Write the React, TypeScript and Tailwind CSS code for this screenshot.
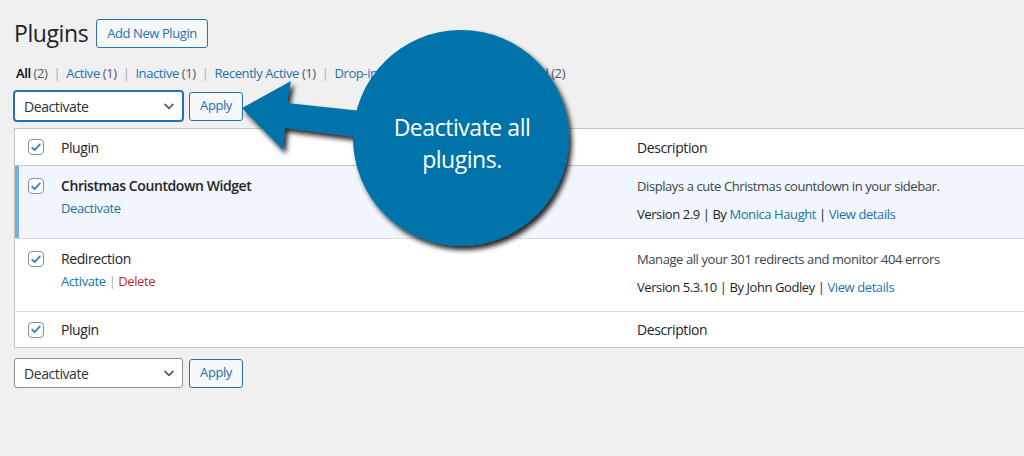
import React from "react";

const FONT = { fontFamily: '"Open Sans", "Noto Sans", sans-serif', letterSpacing: "-0.026em" };

const Check = () => (
  <span className="flex size-4 items-center justify-center rounded-[4px] border border-[#8c8f94] bg-white">
    <svg viewBox="0 0 20 20" className="size-[15px]" fill="none">
      <path d="M4.5 10.2l3.6 3.6 7.4-8.2" stroke="#3582c4" strokeWidth="2.6" strokeLinecap="round" strokeLinejoin="round" />
    </svg>
  </span>
);

const Sep = () => <span className="px-[6px] text-[#a7aaad]">|</span>;

const Chevron = () => (
  <svg viewBox="0 0 20 20" className="size-4" fill="none">
    <path d="M5 8l5 5 5-5" stroke="#50575e" strokeWidth="2" strokeLinecap="round" strokeLinejoin="round" />
  </svg>
);

const BulkActions = ({ focused = false }: { focused?: boolean }) => (
  <div className="flex items-center gap-[6px]">
    <div
      className={`flex h-[30px] w-[169px] items-center justify-between rounded-[3px] border bg-white pl-[9px] pr-[5px] text-[14px] text-[#2c3338] ${
        focused ? "border-[#2271b1] shadow-[0_0_0_1px_#2271b1]" : "border-[#8c8f94]"
      }`}
    >
      <span>Deactivate</span>
      <Chevron />
    </div>
    <button className="h-[29px] w-[54px] rounded-[3px] border border-[#2271b1] bg-[#f6f7f7] text-[13px] text-[#2271b1]">
      Apply
    </button>
  </div>
);

const Row = ({
  name,
  active,
  desc,
  version,
  author,
  authorLink,
}: {
  name: string;
  active: boolean;
  desc: string;
  version: string;
  author: string;
  authorLink: boolean;
}) => (
  <div
    className={`flex h-[73px] border-b border-[#dcdcde] ${active ? "bg-[#f0f6fc]" : "bg-white"}`}
  >
    <div className={`w-[37px] shrink-0 pt-[12px] ${active ? "border-l-4 border-[#72aee6] pl-[9px]" : "pl-[13px]"}`}>
      <Check />
    </div>
    <div className="w-[576px] shrink-0 pl-[9px] pt-[9px]">
      <div className={`text-[14px] text-[#1d2327] ${active ? "font-semibold" : ""}`}>{name}</div>
      <div className="mt-[3px] text-[13px]">
        {active ? (
          <span className="text-[#2271b1]">Deactivate</span>
        ) : (
          <>
            <span className="text-[#2271b1]">Activate</span>
            <span className="text-[#a7aaad]"> | </span>
            <span className="text-[#b32d2e]">Delete</span>
          </>
        )}
      </div>
    </div>
    <div className="pl-[9px] pt-[11px] text-[13px]">
      <div className="text-[#3c434a]">{desc}</div>
      <div className="mt-[8px] text-[#1d2327]">
        Version {version} | By{" "}
        <span className={authorLink ? "text-[#2271b1]" : ""}>{author}</span> |{" "}
        <span className="text-[#2271b1]">View details</span>
      </div>
    </div>
  </div>
);

const HeadRow = ({ top }: { top?: boolean }) => (
  <div
    className={`flex items-center bg-white text-[14px] text-[#1d2327] ${
      top ? "h-[37px] border-b border-[#c3c4c7]" : "h-[35px]"
    }`}
  >
    <div className="w-[37px] shrink-0 pl-[13px]">
      <Check />
    </div>
    <div className="w-[576px] shrink-0 pl-[9px]">Plugin</div>
    <div className="pl-[9px]">Description</div>
  </div>
);

const Callout = () => (
  <div className="pointer-events-none absolute inset-0">
    <svg width="1024" height="456" className="absolute inset-0">
      <defs>
        <filter id="sh" x="-20%" y="-20%" width="150%" height="150%">
          <feDropShadow dx="3" dy="4" stdDeviation="2.5" floodColor="#000" floodOpacity="0.85" />
        </filter>
      </defs>
      <g filter="url(#sh)" fill="#0073aa">
        <polygon points="242,108 291,81 287,103 380,113 380,140 285,128 283,150" />
        <circle cx="461" cy="138" r="108" />
      </g>
    </svg>
    <div
      className="absolute left-[353px] top-[111px] w-[218px] text-center text-[23px] leading-[32px] text-white"
      style={{ fontFamily: '"Open Sans", "Noto Sans", sans-serif', letterSpacing: "-0.02em" }}
    >
      Deactivate all
      <br />
      plugins.
    </div>
  </div>
);

export default function App() {
  return (
    <div className="relative h-[456px] w-[1024px] overflow-hidden bg-[#f0f0f1]" style={FONT}>
      <div className="pl-[14px] pt-[19px]">
        <div className="flex items-center gap-[8px]">
          <h1 className="text-[23px] leading-[29px] text-[#1d2327]">Plugins</h1>
          <button className="h-[29px] rounded-[3px] border border-[#2271b1] bg-[#f6f7f7] px-[10px] text-[13px] text-[#2271b1]">
            Add New Plugin
          </button>
        </div>
        <div className="mt-[15px] pl-[2px] text-[13px] leading-[20px] text-[#50575e]">
          <span className="font-semibold text-[#000]">All</span> (2)
          <Sep />
          <span className="text-[#2271b1]">Active</span> (1)
          <Sep />
          <span className="text-[#2271b1]">Inactive</span> (1)
          <Sep />
          <span className="text-[#2271b1]">Recently Active</span> (1)
          <Sep />
          <span className="text-[#2271b1]">Drop-ins</span> (1)
          <Sep />
          <span className="text-[#2271b1]">Auto-updates Disabled</span> (2)
        </div>
        <div className="mt-[8px]">
          <BulkActions focused />
        </div>
        <div className="mt-[7px] w-[1040px] border border-[#c3c4c7]">
          <HeadRow top />
          <Row
            name="Christmas Countdown Widget"
            active
            desc="Displays a cute Christmas countdown in your sidebar."
            version="2.9"
            author="Monica Haught"
            authorLink
          />
          <Row
            name="Redirection"
            active={false}
            desc="Manage all your 301 redirects and monitor 404 errors"
            version="5.3.10"
            author="John Godley"
            authorLink={false}
          />
          <HeadRow />
        </div>
        <div className="mt-[10px]">
          <BulkActions />
        </div>
      </div>
      <Callout />
    </div>
  );
}
